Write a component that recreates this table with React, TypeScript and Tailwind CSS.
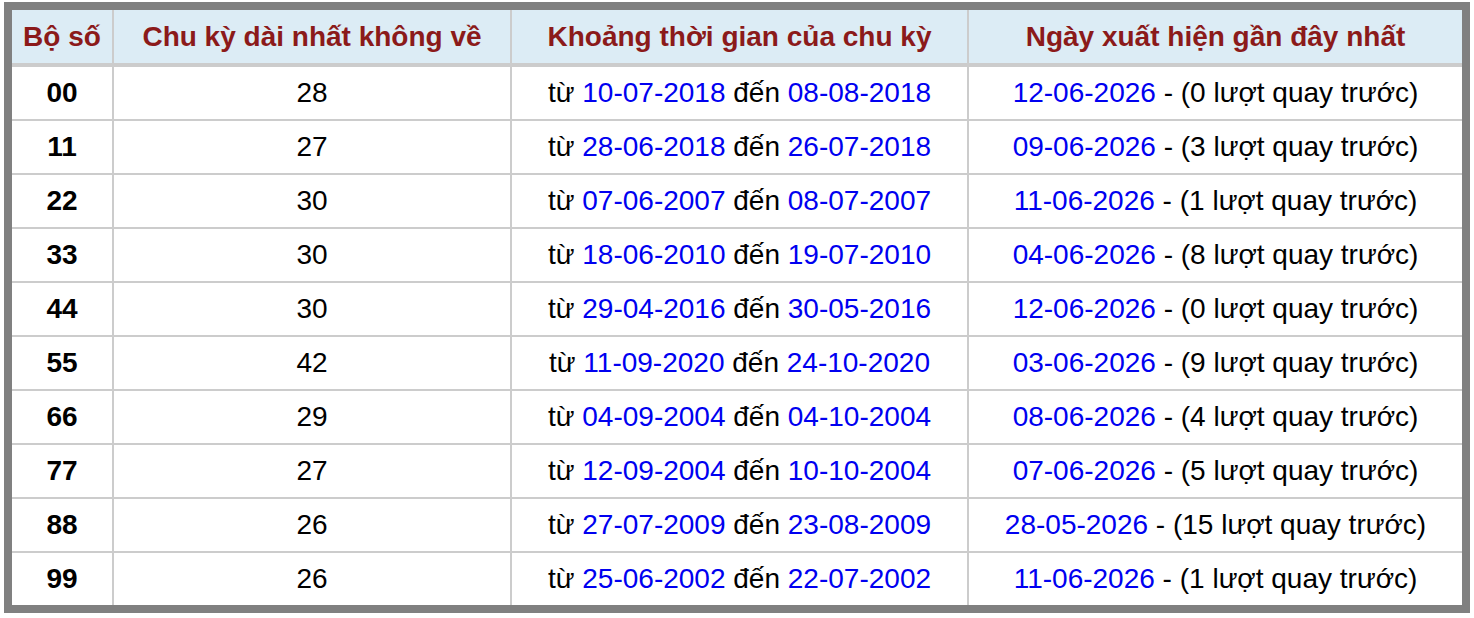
const rows = [
  { so: "00", len: 28, from: "10-07-2018", to: "08-08-2018", last: "12-06-2026", ago: 0 },
  { so: "11", len: 27, from: "28-06-2018", to: "26-07-2018", last: "09-06-2026", ago: 3 },
  { so: "22", len: 30, from: "07-06-2007", to: "08-07-2007", last: "11-06-2026", ago: 1 },
  { so: "33", len: 30, from: "18-06-2010", to: "19-07-2010", last: "04-06-2026", ago: 8 },
  { so: "44", len: 30, from: "29-04-2016", to: "30-05-2016", last: "12-06-2026", ago: 0 },
  { so: "55", len: 42, from: "11-09-2020", to: "24-10-2020", last: "03-06-2026", ago: 9 },
  { so: "66", len: 29, from: "04-09-2004", to: "04-10-2004", last: "08-06-2026", ago: 4 },
  { so: "77", len: 27, from: "12-09-2004", to: "10-10-2004", last: "07-06-2026", ago: 5 },
  { so: "88", len: 26, from: "27-07-2009", to: "23-08-2009", last: "28-05-2026", ago: 15 },
  { so: "99", len: 26, from: "25-06-2002", to: "22-07-2002", last: "11-06-2026", ago: 1 },
];

const cols = "grid grid-cols-[100px_398px_457px_495px]";

export default function App() {
  return (
    <div className="bg-white pl-[4px] pt-[2px] font-['Liberation_Sans',Arial,sans-serif] text-[28px] leading-none">
      <div className="w-[1466px] border-[8px] border-[#808080] bg-white">
        {/* Header */}
        <div className={`${cols} h-[57px] border-b-4 border-[#cccccc] bg-[#dcecf5] font-bold text-[#8b1a1a]`}>
          <div className="flex items-center justify-center">Bộ số</div>
          <div className="flex items-center justify-center border-l-2 border-[#cccccc]">
            Chu kỳ dài nhất không về
          </div>
          <div className="flex items-center justify-center border-l-2 border-[#cccccc]">
            Khoảng thời gian của chu kỳ
          </div>
          <div className="flex items-center justify-center border-l-2 border-[#cccccc]">
            Ngày xuất hiện gần đây nhất
          </div>
        </div>

        {/* Rows */}
        {rows.map((r, i) => (
          <div
            key={r.so}
            className={`${cols} text-black ${i === 0 ? "h-[52px]" : "h-[54px] border-t-2 border-[#cccccc]"}`}
          >
            <div className="flex items-center justify-center font-bold">{r.so}</div>
            <div className="flex items-center justify-center border-l-2 border-[#cccccc]">{r.len}</div>
            <div className="flex items-center justify-center whitespace-pre border-l-2 border-[#cccccc]">
              từ <span className="text-[#0000f0]">{r.from}</span> đến{" "}
              <span className="text-[#0000f0]">{r.to}</span>
            </div>
            <div className="flex items-center justify-center whitespace-pre border-l-2 border-[#cccccc]">
              <span className="text-[#0000f0]">{r.last}</span> - ({r.ago} lượt quay trước)
            </div>
          </div>
        ))}
      </div>
    </div>
  );
}
